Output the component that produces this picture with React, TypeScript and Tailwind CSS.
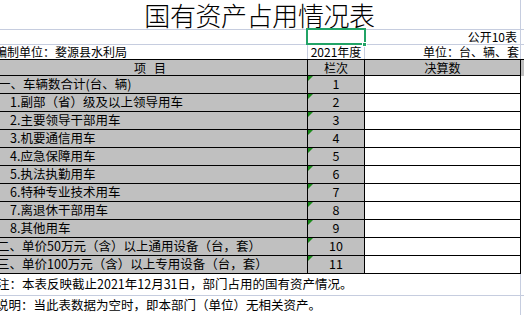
const GRID = "border-[#c6cddf]";

const rows = [
  { label: "一、车辆数合计(台、辆)", no: "1", pad: "pl-[5px]" },
  { label: "1.副部（省）级及以上领导用车", no: "2", pad: "pl-[17px]" },
  { label: "2.主要领导干部用车", no: "3", pad: "pl-[17px]" },
  { label: "3.机要通信用车", no: "4", pad: "pl-[17px]" },
  { label: "4.应急保障用车", no: "5", pad: "pl-[17px]" },
  { label: "5.执法执勤用车", no: "6", pad: "pl-[17px]" },
  { label: "6.特种专业技术用车", no: "7", pad: "pl-[17px]" },
  { label: "7.离退休干部用车", no: "8", pad: "pl-[17px]" },
  { label: "8.其他用车", no: "9", pad: "pl-[17px]" },
  { label: "二、单价50万元（含）以上通用设备（台，套）", no: "10", pad: "pl-[4px]" },
  { label: "三、单价100万元（含）以上专用设备（台，套）", no: "11", pad: "pl-[4px]" },
];

const Flag = () => (
  <span className="absolute left-0 top-0 h-0 w-0 border-t-[5px] border-r-[5px] border-t-[#1a8a1a] border-r-transparent" />
);

export default function App() {
  return (
    <div className="relative h-[315px] w-[524px] overflow-hidden bg-white font-['Noto_Sans_CJK_SC',sans-serif] text-[12px] leading-none text-black">
      <div className="ml-[-7px] w-[531px]">
        {/* title */}
        <div className={`flex h-[30px] border-b ${GRID}`}>
          <div className={`flex w-[528px] items-center justify-center border-r ${GRID} pl-[6px] pt-[1px] text-[26px] font-light tracking-[-0.4px]`}>
            国有资产占用情况表
          </div>
        </div>

        {/* 公开10表 */}
        <div className={`flex h-[15px] border-b ${GRID}`}>
          <div className="w-[314px]" />
          <div className="relative w-[57px]">
            <div className="absolute -left-[1px] -top-[2px] h-[17px] w-[60px] border-2 border-[#21a366]" />
            <div className="absolute left-[55px] top-[12px] h-[5px] w-[5px] border border-white bg-[#21a366]" />
          </div>
          <div className={`flex w-[157px] items-center justify-end border-r ${GRID} pr-[3px]`}>公开10表</div>
        </div>

        {/* 编制单位 */}
        <div className="flex h-[14px]">
          <div className="flex w-[314px] items-center whitespace-nowrap pl-[2px]">编制单位：婺源县水利局</div>
          <div className={`flex w-[57px] items-center justify-center border-l ${GRID}`}>2021年度</div>
          <div className={`flex w-[157px] items-center justify-end overflow-hidden whitespace-nowrap border-x ${GRID} pr-[1px]`}>
            单位：台、辆、套
          </div>
        </div>

        {/* table */}
        <div className="border-t border-black">
          <div className="flex h-[16px] bg-[#c0c0c0]">
            <div className="flex w-[314px] items-center justify-center border-b border-black">项&nbsp;&nbsp;&nbsp;目</div>
            <div className="flex w-[57px] items-center justify-center border-b border-l border-black">栏次</div>
            <div className="flex w-[157px] items-center justify-center border-x border-b border-black">决算数</div>
          </div>
          {rows.map((r) => (
            <div key={r.no} className="flex h-[18px] text-[12.5px]">
              <div className={`flex w-[314px] items-center overflow-hidden whitespace-nowrap border-b border-black bg-[#c0c0c0] ${r.pad}`}>
                {r.label}
              </div>
              <div className="relative flex w-[57px] items-center justify-center border-b border-l border-black bg-[#c0c0c0]">
                <Flag />
                {r.no}
              </div>
              <div className="w-[157px] border-x border-b border-black bg-white" />
            </div>
          ))}
        </div>

        {/* notes */}
        <div className={`flex h-[22px] border-b ${GRID}`}>
          <div className={`w-[528px] whitespace-nowrap border-r ${GRID} pl-[4px] pt-[4px] text-[12.5px]`}>
            注：本表反映截止2021年12月31日，部门占用的国有资产情况。
          </div>
        </div>
        <div className="flex h-[22px]">
          <div className={`w-[528px] whitespace-nowrap border-r ${GRID} pl-[3px] pt-[3px] text-[12.5px]`}>
            说明：当此表数据为空时，即本部门（单位）无相关资产。
          </div>
        </div>
      </div>
    </div>
  );
}
